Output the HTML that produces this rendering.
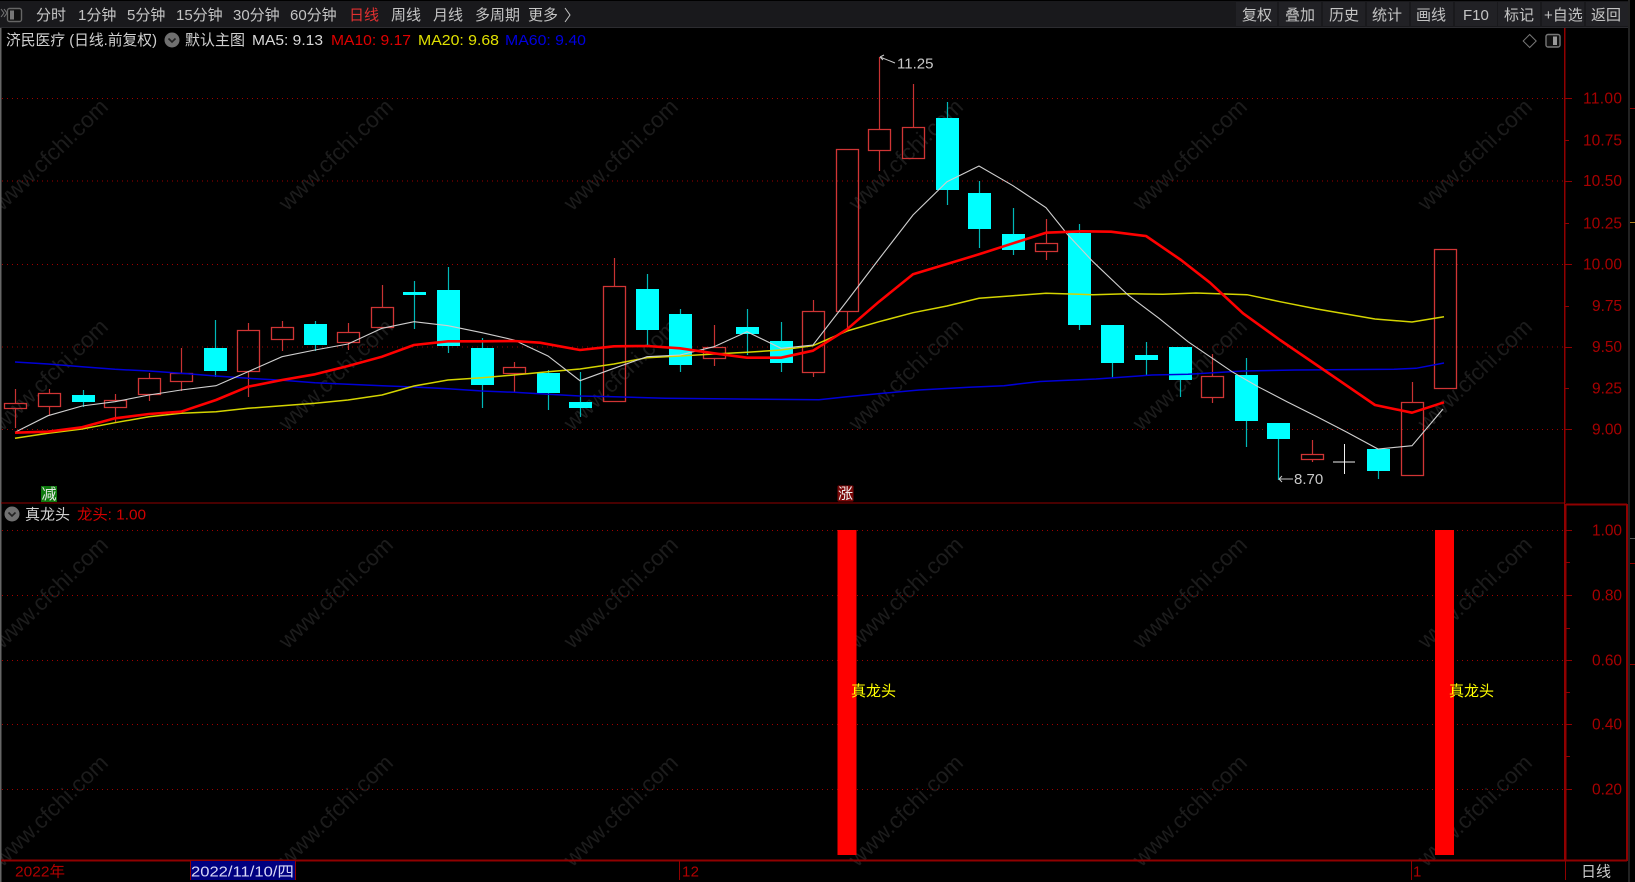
<!DOCTYPE html>
<html lang="zh">
<head>
<meta charset="utf-8">
<title>济民医疗 日线</title>
<style>
html,body{margin:0;padding:0;background:#000;width:1635px;height:882px;overflow:hidden}
svg{display:block;position:absolute;left:0;top:0}
text{font-family:"Liberation Sans","Noto Sans CJK SC",sans-serif;font-size:15px}
.tb text{fill:#c4c4c4}
.ax text{fill:#a80000;font-size:15.5px}
.wm text{fill:#1c1c1c;font-size:22.5px;text-anchor:middle}
</style>
</head>
<body>
<svg width="1635" height="882" viewBox="0 0 1635 882" xmlns="http://www.w3.org/2000/svg">
<rect width="1635" height="882" fill="#000"/>

<!-- watermark -->
<g class="wm" transform="translate(5,3)">
<text transform="translate(51,157) rotate(-44)">www.cfchi.com</text>
<text transform="translate(336,157) rotate(-44)">www.cfchi.com</text>
<text transform="translate(621,157) rotate(-44)">www.cfchi.com</text>
<text transform="translate(906,157) rotate(-44)">www.cfchi.com</text>
<text transform="translate(1190,157) rotate(-44)">www.cfchi.com</text>
<text transform="translate(1475,157) rotate(-44)">www.cfchi.com</text>
<text transform="translate(51,377) rotate(-44)">www.cfchi.com</text>
<text transform="translate(336,377) rotate(-44)">www.cfchi.com</text>
<text transform="translate(621,377) rotate(-44)">www.cfchi.com</text>
<text transform="translate(906,377) rotate(-44)">www.cfchi.com</text>
<text transform="translate(1190,377) rotate(-44)">www.cfchi.com</text>
<text transform="translate(1475,377) rotate(-44)">www.cfchi.com</text>
<text transform="translate(51,595) rotate(-44)">www.cfchi.com</text>
<text transform="translate(336,595) rotate(-44)">www.cfchi.com</text>
<text transform="translate(621,595) rotate(-44)">www.cfchi.com</text>
<text transform="translate(906,595) rotate(-44)">www.cfchi.com</text>
<text transform="translate(1190,595) rotate(-44)">www.cfchi.com</text>
<text transform="translate(1475,595) rotate(-44)">www.cfchi.com</text>
<text transform="translate(51,813) rotate(-44)">www.cfchi.com</text>
<text transform="translate(336,813) rotate(-44)">www.cfchi.com</text>
<text transform="translate(621,813) rotate(-44)">www.cfchi.com</text>
<text transform="translate(906,813) rotate(-44)">www.cfchi.com</text>
<text transform="translate(1190,813) rotate(-44)">www.cfchi.com</text>
<text transform="translate(1475,813) rotate(-44)">www.cfchi.com</text>
</g>

<!-- toolbar -->
<rect x="0" y="1" width="1630" height="26" fill="#19191c"/>
<rect x="0" y="27" width="1630" height="1" fill="#2c2c30"/>
<g fill="#212125">
<rect x="1236" y="2" width="41" height="24"/>
<rect x="1279" y="2" width="42" height="24"/>
<rect x="1323" y="2" width="42" height="24"/>
<rect x="1367" y="2" width="42" height="24"/>
<rect x="1411" y="2" width="42" height="24"/>
<rect x="1455" y="2" width="42" height="24"/>
<rect x="1498" y="2" width="42" height="24"/>
<rect x="1542" y="2" width="42" height="24"/>
<rect x="1586" y="2" width="42" height="24"/>
</g>
<g class="tb">
<text x="36" y="20">分时</text>
<text x="78" y="20">1分钟</text>
<text x="127" y="20">5分钟</text>
<text x="176" y="20">15分钟</text>
<text x="233" y="20">30分钟</text>
<text x="290" y="20">60分钟</text>
<text x="349" y="20" style="fill:#e03030">日线</text>
<text x="391" y="20">周线</text>
<text x="433" y="20">月线</text>
<text x="475" y="20">多周期</text>
<text x="528" y="20">更多</text>
<text x="1242" y="20">复权</text>
<text x="1285" y="20">叠加</text>
<text x="1329" y="20">历史</text>
<text x="1372" y="20">统计</text>
<text x="1416" y="20">画线</text>
<text x="1463" y="20">F10</text>
<text x="1504" y="20">标记</text>
<text x="1544" y="20">+自选</text>
<text x="1591" y="20">返回</text>
</g>
<path d="M565 8l5 7-5 7" fill="none" stroke="#c4c4c4" stroke-width="1"/>
<path d="M1 9l3 4-3 4M4 9l3 4-3 4" fill="none" stroke="#777" stroke-width="1"/>
<rect x="7.5" y="8.5" width="14" height="13" rx="2" fill="#111" stroke="#666" stroke-width="1.4"/>
<rect x="10" y="10.5" width="4" height="9" fill="#777"/>

<!-- outer frame -->
<rect x="0" y="28" width="1.5" height="854" fill="#666"/>
<rect x="1628" y="0" width="2" height="882" fill="#222"/>

<!-- top right icons -->
<path d="M1529.7 34.5l6.5 6.5-6.5 6.5-6.5-6.5z" fill="none" stroke="#777" stroke-width="1"/>
<rect x="1546" y="34.5" width="14" height="12.5" rx="2" fill="#111" stroke="#777" stroke-width="1.4"/>
<rect x="1553" y="36.5" width="4" height="8.5" fill="#999"/>

<!-- grid -->
<g stroke="#a00000" stroke-width="1" stroke-dasharray="1 4" fill="none">
<path d="M2 98.5H1563M2 181H1563M2 264.5H1563M2 347H1563M2 429.5H1563"/>
<path d="M2 530.5H1563M2 595.5H1563M2 660.5H1563M2 724.5H1563M2 789.5H1563"/>
</g>

<!-- candle wicks -->
<path fill="none" stroke="#c83232" stroke-width="1.2" d="
M15.5 389V403M15.5 408V428
M49.5 389V393M49.5 406V415
M115.5 394V400M115.5 407V423
M149.5 373V378M149.5 394V401
M181.5 348V373M181.5 381V391
M248.5 323V330M248.5 371V397
M282.5 321V327M282.5 339V351
M348.5 323V332M348.5 342V350
M382.5 285V307
M514.5 362V367M514.5 373V392
M614.5 258V286
M714.5 325V347M714.5 358V366
M813.5 300V311M813.5 372V377
M847.5 311V328
M879.5 57V129M879.5 150V171
M913.5 84V127
M1046.5 219V243M1046.5 251V260
M1212.5 354V376M1212.5 397V403
M1312.5 440V454M1312.5 459V462
M1412.5 382V402"/>
<path fill="none" stroke="#00b8b8" stroke-width="1.2" d="
M83.5 390V395M83.5 402V407
M215.5 320V348M215.5 371V377
M315.5 321V324M315.5 345V351
M414.5 281V292M414.5 295V329
M448.5 267V290M448.5 346V353
M482.5 338V348M482.5 385V408
M548.5 370V373M548.5 393V410
M580.5 372V402M580.5 408V417
M647.5 274V289M647.5 330V345
M680.5 309V314M680.5 365V372
M747.5 309V327M747.5 334V355
M781.5 322V341M781.5 363V372
M947.5 102V118M947.5 190V205
M979.5 181V193M979.5 229V248
M1013.5 208V234M1013.5 250V255
M1079.5 224V233M1079.5 325V330
M1112.5 363V378
M1146.5 342V355M1146.5 360V376
M1180.5 380V397
M1246.5 358V375M1246.5 421V447
M1278.5 439V480
M1378.5 471V479"/>

<!-- cyan bodies -->
<path shape-rendering="crispEdges" fill="#00ffff" d="
M72 395h23V402h-23z
M204 348h23V371h-23z
M304 324h23V345h-23z
M403 292h23V295h-23z
M437 290h23V346h-23z
M471 348h23V385h-23z
M537 373h23V393h-23z
M569 402h23V408h-23z
M636 289h23V330h-23z
M669 314h23V365h-23z
M736 327h23V334h-23z
M770 341h23V363h-23z
M936 118h23V190h-23z
M968 193h23V229h-23z
M1002 234h23V250h-23z
M1068 233h23V325h-23z
M1101 325h23V363h-23z
M1135 355h23V360h-23z
M1169 347h23V380h-23z
M1235 375h23V421h-23z
M1267 423h23V439h-23z
M1367 449h23V471h-23z"/>

<!-- red hollow bodies -->
<path fill="none" stroke="#d03535" stroke-width="1.3" d="
M4.5 403.5h22v5h-22z
M38.5 393.5h22v13h-22z
M104.5 400.5h22v7h-22z
M138.5 378.5h22v16h-22z
M170.5 373.5h22v8h-22z
M237.5 330.5h22v41h-22z
M271.5 327.5h22v12h-22z
M337.5 332.5h22v10h-22z
M371.5 307.5h22v20h-22z
M503.5 367.5h22v6h-22z
M603.5 286.5h22v115h-22z
M703.5 347.5h22v11h-22z
M802.5 311.5h22v61h-22z
M836.5 149.5h22v162h-22z
M868.5 129.5h22v21h-22z
M902.5 127.5h22v31h-22z
M1035.5 243.5h22v8h-22z
M1201.5 376.5h22v21h-22z
M1301.5 454.5h22v5h-22z
M1401.5 402.5h22v73h-22z
M1434.5 249.5h22v139h-22z"/>
<!-- doji -->
<path shape-rendering="crispEdges" d="M1344.5 444V474M1333 462H1355" stroke="#f0f0f0" stroke-width="1.4" fill="none"/>

<!-- MA60 -->
<polyline fill="none" stroke="#0000d8" stroke-width="1.5" points="15,362 48,364 82,366.7 115,369.3 149,371 181,373.3 216,376 248,378.3 282,380.3 315,382.7 348,384.3 382,385.7 414,387 448,388.7 482,391 514,392.3 548,394.3 580,396 614,396.7 665,398.3 765,399.3 819,399.7 847,396.7 883,393.3 919,390 969,387.3 1004,385.7 1040,381.5 1096,379 1152,375 1188,374.3 1243,371 1295,370 1394,369.3 1416,368.3 1444,363"/>
<!-- MA20 -->
<polyline fill="none" stroke="#d4d400" stroke-width="1.5" points="15,438.3 48,433.3 82,429 115,422.7 149,416.7 181,413.3 216,411.7 248,408.3 282,405.7 315,403.3 348,400 382,395 414,386 448,380 482,377.7 514,375 548,371.7 580,369 614,364 647,357.7 680,356 714,354 747,352.3 781,350 813,345.7 847,331 879,321.7 913,312.7 947,306 979,298.3 1013,295.7 1046,293.3 1079,294.3 1093,294.7 1128,293.7 1163,294.3 1196,293 1247,294.7 1280,301.7 1317,309 1375,319 1412,322 1444,316.7"/>
<!-- MA5 -->
<polyline fill="none" stroke="#cfcfcf" stroke-width="1.1" points="15,432.3 48,415.7 82,406 115,401.7 149,395 181,390 216,385.7 248,371.7 282,356.7 315,350 348,344 382,328.3 414,321.7 448,325.7 482,332.7 514,340 548,356 580,380.7 614,368.3 647,356.7 680,355 714,346.7 747,331.7 781,348.3 813,345 847,301 879,259 913,215 947,181.7 979,166 1013,185.7 1046,207.7 1068,235 1093,261.7 1128,295 1159,318.3 1188,341.7 1232,371.7 1258,386.7 1287,401.7 1317,416.7 1346,431.7 1378,449 1412,445.7 1443,409"/>
<!-- MA10 -->
<polyline fill="none" stroke="#ff0000" stroke-width="2.6" stroke-linejoin="round" points="15,432.7 48,431.7 82,427.3 115,418.3 149,414 181,411.7 216,400 248,386.7 282,380 315,374.3 348,366 382,356.7 414,345 448,341.3 482,341.3 514,341 540,342.7 580,350 614,346.3 647,346 680,348.3 714,353.3 747,357.7 781,357.7 813,350.7 847,329.3 879,301.7 913,274.3 947,264 979,254.3 1013,243.3 1046,232.7 1082,231.3 1111,231.7 1146,236 1181,260 1210,282.7 1243,313.3 1280,340 1324,370 1375,405 1412,412.7 1444,402.3"/>

<!-- high / low labels -->
<path d="M880 57l15 6M880 57l4-2M880 57l3 3" fill="none" stroke="#c8c8c8" stroke-width="1"/>
<text x="897" y="68.5" fill="#c8c8c8">11.25</text>
<path d="M1279 479h14M1279 479l3-3M1279 479l3 3" fill="none" stroke="#c8c8c8" stroke-width="1"/>
<text x="1294" y="484" fill="#c8c8c8">8.70</text>

<!-- markers -->
<rect x="41" y="486" width="16" height="16" fill="#0e7a0e"/>
<text x="41.5" y="499" style="font-size:15px" fill="#e8e8e8">减</text>
<rect x="837.5" y="485.5" width="16" height="16" rx="1" fill="#7a0808"/>
<text x="838" y="498.5" style="font-size:15px" fill="#f0f0f0">涨</text>

<!-- legend main -->
<text x="6" y="45" fill="#d0d0d0" textLength="151" lengthAdjust="spacingAndGlyphs">济民医疗 (日线.前复权)</text>
<circle cx="172" cy="40" r="7.5" fill="#707070"/>
<path d="M168.5 38.5l3.5 3.5 3.5-3.5" fill="none" stroke="#222" stroke-width="1.6"/>
<text x="185" y="45" fill="#d0d0d0">默认主图</text>
<text x="252" y="45" fill="#d8d8d8" textLength="71" lengthAdjust="spacingAndGlyphs">MA5: 9.13</text>
<text x="331" y="45" fill="#e00000" textLength="80" lengthAdjust="spacingAndGlyphs">MA10: 9.17</text>
<text x="418" y="45" fill="#e0e000" textLength="81" lengthAdjust="spacingAndGlyphs">MA20: 9.68</text>
<text x="505" y="45" fill="#0000e0" textLength="81" lengthAdjust="spacingAndGlyphs">MA60: 9.40</text>

<!-- legend sub -->
<circle cx="12" cy="514" r="7.5" fill="#707070"/>
<path d="M8.5 512.5l3.5 3.5 3.5-3.5" fill="none" stroke="#222" stroke-width="1.6"/>
<text x="25" y="519.5" fill="#d0d0d0">真龙头</text>
<text x="77" y="519.5" fill="#d00000" textLength="69" lengthAdjust="spacingAndGlyphs">龙头: 1.00</text>

<!-- sub chart -->
<rect x="837.5" y="530" width="19" height="325" fill="#ff0000"/>
<rect x="1435" y="530" width="19" height="325" fill="#ff0000"/>
<text x="851" y="696" fill="#ffff00">真龙头</text>
<text x="1449" y="696" fill="#ffff00">真龙头</text>

<!-- axes -->
<g shape-rendering="crispEdges" fill="none" stroke="#900000">
<path d="M1564.5 28V860" stroke-width="1"/>
<path d="M1565 28V503"/>
<path d="M1 503H1565" stroke-width="1"/>
<path d="M1565.5 504.5H1627M1565.5 504V861M1627 504V861M1 860.5H1627" stroke-width="2"/>
<path d="M190.5 861V880M295.5 861V880M679.5 861V880M1411.5 861V880M1565.5 861V880"/>
<path d="M1565 98.5H1572M1565 140.5H1569M1565 181.5H1572M1565 223.5H1569M1565 264.5H1572M1565 306.5H1569M1565 347.5H1572M1565 388.5H1569M1565 429.5H1572"/>
<path d="M1566 530.5H1572M1566 562.5H1570M1566 595.5H1572M1566 628.5H1570M1566 660.5H1572M1566 692.5H1570M1566 724.5H1572M1566 756.5H1570M1566 789.5H1572"/>
<path d="M1630 108.5H1635M1630 563.5H1635M1630 664.5H1635"/>
</g>
<path shape-rendering="crispEdges" d="M1630 222.5H1635" stroke="#b08020"/>
<path shape-rendering="crispEdges" d="M1630 538.5H1635" stroke="#555"/>

<g class="ax">
<text x="1583" y="103.5" textLength="39">11.00</text>
<text x="1583" y="145.5" textLength="39">10.75</text>
<text x="1583" y="186" textLength="39">10.50</text>
<text x="1583" y="228.5" textLength="39">10.25</text>
<text x="1583" y="269.5" textLength="39">10.00</text>
<text x="1592" y="311" textLength="30">9.75</text>
<text x="1592" y="352" textLength="30">9.50</text>
<text x="1592" y="393.5" textLength="30">9.25</text>
<text x="1592" y="434.5" textLength="30">9.00</text>
<text x="1592" y="535.5" textLength="30">1.00</text>
<text x="1592" y="600.5" textLength="30">0.80</text>
<text x="1592" y="665.5" textLength="30">0.60</text>
<text x="1592" y="729.5" textLength="30">0.40</text>
<text x="1592" y="794.5" textLength="30">0.20</text>
</g>

<!-- bottom axis -->
<rect x="191" y="861" width="104" height="19" fill="#000080"/>
<text x="15" y="876.5" fill="#b00000" textLength="50" lengthAdjust="spacingAndGlyphs">2022年</text>
<text x="191" y="876.5" fill="#d8d8f8" textLength="103" lengthAdjust="spacingAndGlyphs">2022/11/10/四</text>
<text x="682" y="876.5" fill="#b00000" textLength="17">12</text>
<text x="1413" y="876.5" fill="#b00000">1</text>
<text x="1581" y="876.5" fill="#c8c8c8">日线</text>
</svg>
</body>
</html>
